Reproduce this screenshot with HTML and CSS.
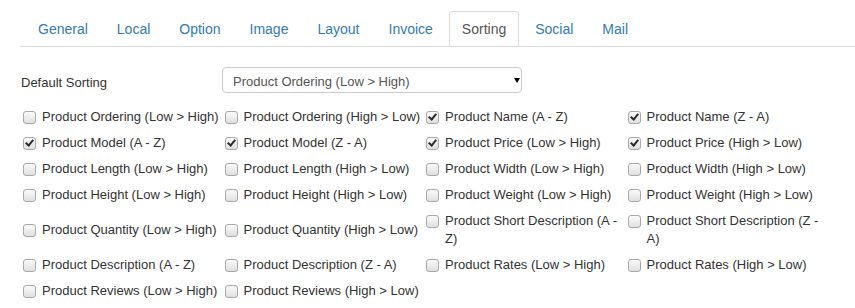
FILE: index.html
```html
<!DOCTYPE html>
<html lang="en">
<head>
    <meta charset="UTF-8">
    <meta name="viewport" content="width=device-width, initial-scale=1.0">
    <title>Settings - Sorting</title>
    <link rel="stylesheet" href="styles.css">
</head>
<body>

<div class="page">
    <!-- Settings tabs -->
    <ul class="nav-tabs">
        <li><a href="#">General</a></li>
        <li><a href="#">Local</a></li>
        <li><a href="#">Option</a></li>
        <li><a href="#">Image</a></li>
        <li><a href="#">Layout</a></li>
        <li><a href="#">Invoice</a></li>
        <li class="active"><a href="#">Sorting</a></li>
        <li><a href="#">Social</a></li>
        <li><a href="#">Mail</a></li>
    </ul>

    <!-- Default sorting -->
    <div class="form-row">
        <label class="form-label" for="default-sorting">Default Sorting</label>
        <div class="select-wrap">
            <select id="default-sorting">
                <option selected>Product Ordering (Low &gt; High)</option>
                <option>Product Ordering (High &gt; Low)</option>
                <option>Product Name (A - Z)</option>
                <option>Product Name (Z - A)</option>
            </select>
        </div>
    </div>

    <!-- Allowed sortings -->
    <div class="sort-grid">
        <label class="check"><input type="checkbox"><span>Product Ordering (Low &gt; High)</span></label>
        <label class="check"><input type="checkbox"><span>Product Ordering (High &gt; Low)</span></label>
        <label class="check"><input type="checkbox" checked><span>Product Name (A - Z)</span></label>
        <label class="check"><input type="checkbox" checked><span>Product Name (Z - A)</span></label>

        <label class="check"><input type="checkbox" checked><span>Product Model (A - Z)</span></label>
        <label class="check"><input type="checkbox" checked><span>Product Model (Z - A)</span></label>
        <label class="check"><input type="checkbox" checked><span>Product Price (Low &gt; High)</span></label>
        <label class="check"><input type="checkbox" checked><span>Product Price (High &gt; Low)</span></label>

        <label class="check"><input type="checkbox"><span>Product Length (Low &gt; High)</span></label>
        <label class="check"><input type="checkbox"><span>Product Length (High &gt; Low)</span></label>
        <label class="check"><input type="checkbox"><span>Product Width (Low &gt; High)</span></label>
        <label class="check"><input type="checkbox"><span>Product Width (High &gt; Low)</span></label>

        <label class="check"><input type="checkbox"><span>Product Height (Low &gt; High)</span></label>
        <label class="check"><input type="checkbox"><span>Product Height (High &gt; Low)</span></label>
        <label class="check"><input type="checkbox"><span>Product Weight (Low &gt; High)</span></label>
        <label class="check"><input type="checkbox"><span>Product Weight (High &gt; Low)</span></label>

        <label class="check"><input type="checkbox"><span>Product Quantity (Low &gt; High)</span></label>
        <label class="check"><input type="checkbox"><span>Product Quantity (High &gt; Low)</span></label>
        <label class="check"><input type="checkbox"><span>Product Short Description (A - Z)</span></label>
        <label class="check"><input type="checkbox"><span>Product Short Description (Z - A)</span></label>

        <label class="check"><input type="checkbox"><span>Product Description (A - Z)</span></label>
        <label class="check"><input type="checkbox"><span>Product Description (Z - A)</span></label>
        <label class="check"><input type="checkbox"><span>Product Rates (Low &gt; High)</span></label>
        <label class="check"><input type="checkbox"><span>Product Rates (High &gt; Low)</span></label>

        <label class="check"><input type="checkbox"><span>Product Reviews (Low &gt; High)</span></label>
        <label class="check"><input type="checkbox"><span>Product Reviews (High &gt; Low)</span></label>
    </div>
</div>

</body>
</html>
```

FILE: styles.css
```css
body {
    margin: 0;
    font-family: "Liberation Sans", Arial, sans-serif;
    font-size: 13px;
    color: #333;
    background-color: #fff;
}
.page {
    padding: 11px 0 0 20px;
}
.nav-tabs {
    display: flex;
    list-style: none;
    margin: 0 0 20px;
    padding: 0 0 0 5px;
    border-bottom: 1px solid #ddd;
}
.nav-tabs li {
    margin-right: 3px;
}
.nav-tabs a {
    display: block;
    padding: 7px 12px;
    font-size: 14px;
    line-height: 20px;
    color: #337ab7;
    text-decoration: none;
    border: 1px solid transparent;
    border-bottom: 0;
    border-radius: 4px 4px 0 0;
}
.nav-tabs .active a {
    color: #555;
    border-color: #ddd;
    background-color: #fff;
}
.form-row {
    display: flex;
    margin-left: 1px;
}
.form-label {
    width: 201px;
    padding-top: 6px;
    line-height: 20px;
}
.select-wrap {
    position: relative;
    width: 300px;
    height: 26px;
}
.select-wrap::after {
    content: "";
    position: absolute;
    right: 2px;
    top: 11px;
    border-left: 3px solid transparent;
    border-right: 3px solid transparent;
    border-top: 5px solid #000;
    pointer-events: none;
}
.select-wrap select {
    appearance: none;
    -webkit-appearance: none;
    width: 300px;
    height: 26px;
    margin: 0;
    padding: 3px 10px 0;
    border: 1px solid #ccc;
    border-radius: 4px;
    background-color: #fff;
    font-family: "Liberation Sans", Arial, sans-serif;
    font-size: 13px;
    color: #555;
}
.sort-grid {
    display: grid;
    grid-template-columns: repeat(4, 201.5px);
    align-items: center;
    margin: 11px 0 0 1px;
}
.check {
    display: flex;
    align-items: flex-start;
    padding: 4px 0;
    line-height: 18px;
}
.check input {
    appearance: none;
    -webkit-appearance: none;
    position: relative;
    flex: none;
    width: 13px;
    height: 13px;
    margin: 3px 6px 0 2px;
    border: 1px solid #a9a9a9;
    border-radius: 3px;
    background: linear-gradient(#fbfbfb, #dfdfdf);
}
.check input:checked::after {
    content: "";
    position: absolute;
    left: 3px;
    top: 0;
    width: 3px;
    height: 6px;
    border: solid #2b2b2b;
    border-width: 0 2px 2px 0;
    transform: rotate(40deg);
}
```
